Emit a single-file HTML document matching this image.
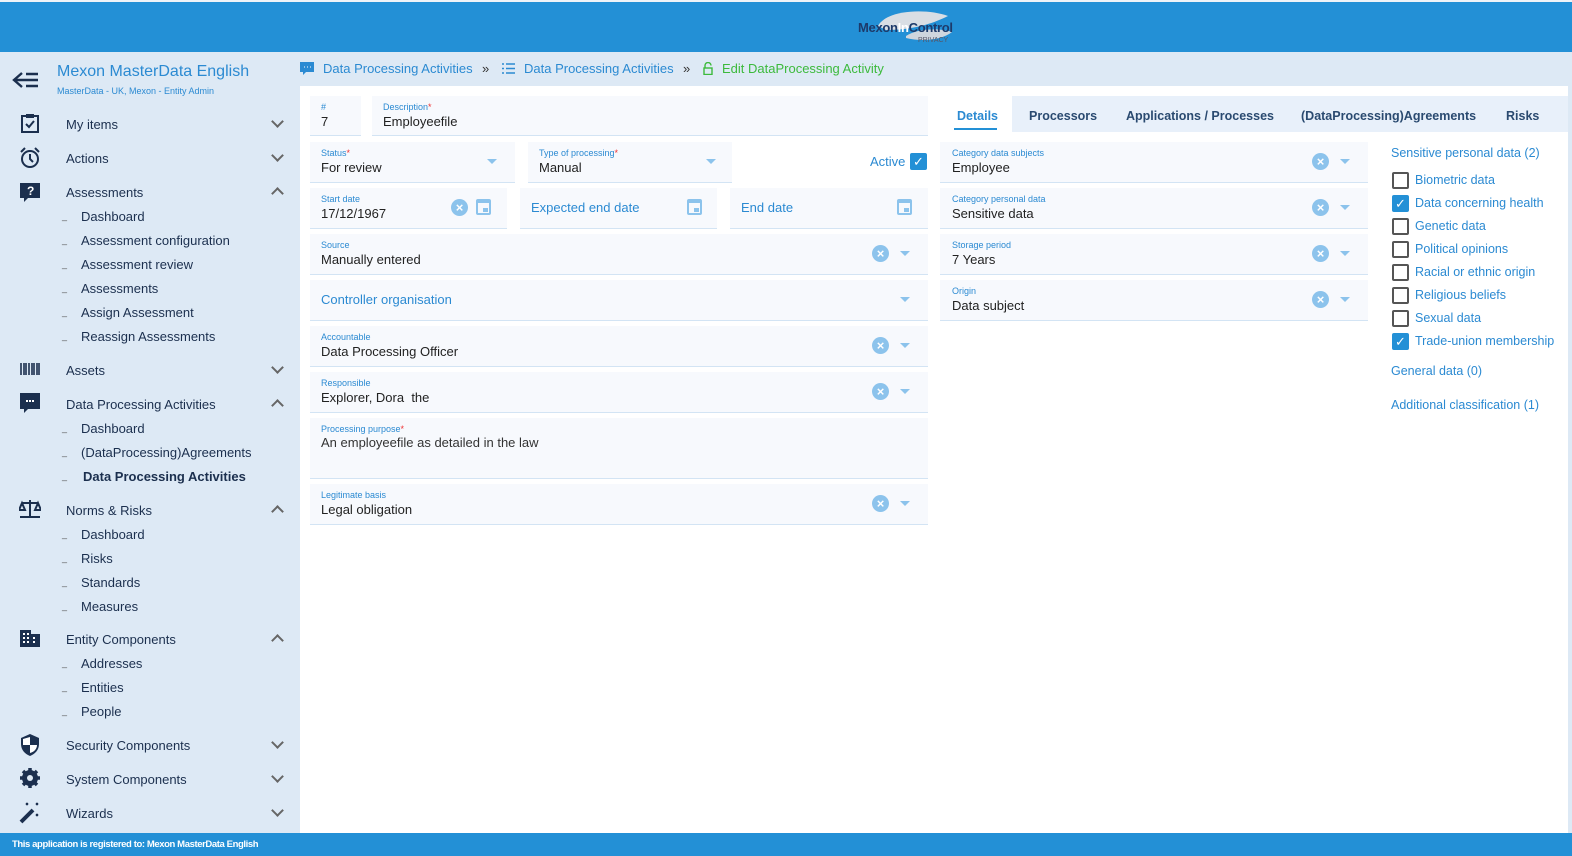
<!DOCTYPE html>
<html><head><meta charset="utf-8"><style>
*{box-sizing:border-box;margin:0;padding:0}
body{width:1572px;height:856px;position:relative;overflow:hidden;font-family:"Liberation Sans",Arial,sans-serif;background:#dde9f5;color:#1b2f4e}
.a{position:absolute}
.top{left:0;top:2px;width:1572px;height:50px;background:#2390d6}
.foot{left:0;top:833px;width:1572px;height:23px;background:#2390d6;color:#fff;font-size:9.5px;padding:6px 12px;font-weight:bold;letter-spacing:-0.4px}
.main{left:300px;top:86px;width:1268px;height:747px;background:#fff}
.nav{font-size:13px;color:#1b2f4e}
.sub{font-size:13px;color:#1b2f4e}
.dash{font-size:9px;color:#555}
.chev{width:9px;height:9px;border-right:2px solid #666;border-bottom:2px solid #666}
.f{background:#f7f9fd;border-bottom:1px solid #d3e4f4}
.lb{position:absolute;left:11px;top:6px;font-size:9px;color:#2b8ad2}
.lb i{color:#e33;font-style:normal}
.v{position:absolute;left:11px;top:18px;font-size:13px;color:#222}
.ph{position:absolute;left:11px;top:12px;font-size:13px;color:#2b8ad2}
.x{position:absolute;width:17px;height:17px;border-radius:50%;background:#8cc3ec;color:#fff;font-size:13px;font-weight:bold;text-align:center;line-height:17px}
.dd{position:absolute;width:0;height:0;border-left:5px solid transparent;border-right:5px solid transparent;border-top:5px solid #8cc3ec}
.cal{position:absolute;width:15px;height:16px;border:2px solid #8cc3ec;border-top-width:4px;border-radius:2px}
.cal:after{content:"";position:absolute;right:1px;bottom:1px;width:5px;height:4px;background:#8cc3ec}
.tab{font-size:12.5px;font-weight:bold;color:#2a4a70;top:109px}
.cb{width:17px;height:17px;border:2px solid #555;border-radius:2px}
.cbc{width:17px;height:17px;background:#2390d6;border-radius:2px;color:#fff;font-size:13px;text-align:center;line-height:17px}
.cl{font-size:12.5px;color:#2b8ad2}
</style></head><body>
<div class="a" style="left:0;top:0;width:1572px;height:2px;background:#eef3f8"></div>
<div class="a top"></div>
<svg class="a" style="left:856px;top:8px" width="104" height="38"><path d="M22 18 C30 2 70 0 92 8 C80 14 60 22 30 22 Z" fill="#d9dee4"/><path d="M50 28 C62 20 84 20 96 24 C86 32 66 34 50 30 Z" fill="#cfd6de"/><text x="2" y="24" font-family="Liberation Sans" font-weight="bold" font-size="13" fill="#1d3a6a" letter-spacing="-0.3">Mexon<tspan fill="#fff">In</tspan>Control</text><text x="62" y="34" font-family="Liberation Sans" font-size="7" fill="#556">PRIVACY</text></svg>
<div class="a main"></div>

<!-- sidebar -->
<svg class="a" style="left:12px;top:70px" width="28" height="20"><path d="M10 3 L2 10 L10 17 M2 10 H26 M14 4 H26 M14 16 H26" stroke="#1b2f4e" stroke-width="2.4" fill="none"/></svg>
<div class="a" style="left:57px;top:63px;font-size:16px;color:#2b8ad2">Mexon MasterData English</div>
<div class="a" style="left:57px;top:86px;font-size:9px;color:#2b8ad2">MasterData - UK, Mexon - Entity Admin</div>

<svg class="a" style="left:20px;top:113px" width="20" height="20"><rect x="2" y="3" width="16" height="16" fill="none" stroke="#1b2f4e" stroke-width="2"/><rect x="6" y="1" width="8" height="4" fill="#1b2f4e"/><path d="M6 11 L9 14 L14 8" stroke="#1b2f4e" stroke-width="2" fill="none"/></svg>
<div class="a nav" style="left:66px;top:117px">My items</div><div class="a chev" style="left:273px;top:117px;transform:rotate(45deg)"></div>
<svg class="a" style="left:19px;top:147px" width="22" height="22"><circle cx="11" cy="12" r="8" fill="none" stroke="#1b2f4e" stroke-width="2"/><path d="M11 7 V12 L14 15 M2 5 L6 1 M20 5 L16 1" stroke="#1b2f4e" stroke-width="2" fill="none"/></svg>
<div class="a nav" style="left:66px;top:151px">Actions</div><div class="a chev" style="left:273px;top:151px;transform:rotate(45deg)"></div>
<svg class="a" style="left:20px;top:181px" width="20" height="22"><path d="M0 2 H20 V17 H8 L4 21 V17 H0 Z" fill="#1b2f4e"/><text x="7" y="14" font-size="12" font-weight="bold" fill="#fff" font-family="Liberation Sans">?</text></svg>
<div class="a nav" style="left:66px;top:185px">Assessments</div><div class="a chev" style="left:273px;top:189px;transform:rotate(225deg)"></div>
<div class="a sub" style="left:81px;top:209px">Dashboard</div>
<div class="a sub" style="left:81px;top:233px">Assessment configuration</div>
<div class="a sub" style="left:81px;top:257px">Assessment review</div>
<div class="a sub" style="left:81px;top:281px">Assessments</div>
<div class="a sub" style="left:81px;top:305px">Assign Assessment</div>
<div class="a sub" style="left:81px;top:329px">Reassign Assessments</div>
<svg class="a" style="left:20px;top:363px" width="20" height="12"><path d="M1 0V12M4 0V12M6 0V12M9 0V12M12 0V12M14 0V12M17 0V12M19 0V12" stroke="#1b2f4e" stroke-width="1.6"/></svg>
<div class="a nav" style="left:66px;top:363px">Assets</div><div class="a chev" style="left:273px;top:363px;transform:rotate(45deg)"></div>
<svg class="a" style="left:20px;top:393px" width="20" height="22"><path d="M0 0 H20 V16 H8 L4 20 V16 H0 Z" fill="#1b2f4e"/><path d="M6 8h2M9 8h2M12 8h2" stroke="#fff" stroke-width="2"/></svg>
<div class="a nav" style="left:66px;top:397px">Data Processing Activities</div><div class="a chev" style="left:273px;top:401px;transform:rotate(225deg)"></div>
<div class="a sub" style="left:81px;top:421px">Dashboard</div>
<div class="a sub" style="left:81px;top:445px">(DataProcessing)Agreements</div>
<div class="a sub" style="left:83px;top:469px;font-weight:bold">Data Processing Activities</div>
<svg class="a" style="left:19px;top:499px" width="22" height="20"><path d="M11 1V18M3 4H19M1 18H21M3 4L0 11H6Z M19 4L16 11H22Z" stroke="#1b2f4e" stroke-width="2" fill="none"/></svg>
<div class="a nav" style="left:66px;top:503px">Norms &amp; Risks</div><div class="a chev" style="left:273px;top:507px;transform:rotate(225deg)"></div>
<div class="a sub" style="left:81px;top:527px">Dashboard</div>
<div class="a sub" style="left:81px;top:551px">Risks</div>
<div class="a sub" style="left:81px;top:575px">Standards</div>
<div class="a sub" style="left:81px;top:599px">Measures</div>
<svg class="a" style="left:20px;top:630px" width="20" height="17"><path d="M0 0H11V4H20V17H0Z" fill="#1b2f4e"/><path d="M3 4h2M7 4h2M3 8h2M7 8h2M13 8h2M3 12h2M7 12h2M13 12h2" stroke="#fff" stroke-width="2"/></svg>
<div class="a nav" style="left:66px;top:632px">Entity Components</div><div class="a chev" style="left:273px;top:636px;transform:rotate(225deg)"></div>
<div class="a sub" style="left:81px;top:656px">Addresses</div>
<div class="a sub" style="left:81px;top:680px">Entities</div>
<div class="a sub" style="left:81px;top:704px">People</div>
<svg class="a" style="left:20px;top:734px" width="20" height="22"><path d="M10 0L19 4V10C19 16 15 20 10 22C5 20 1 16 1 10V4Z" fill="#1b2f4e"/><path d="M10 3V11H17C17 15 14 18 10 19V11H3V5Z" fill="#fff"/></svg>
<div class="a nav" style="left:66px;top:738px">Security Components</div><div class="a chev" style="left:273px;top:738px;transform:rotate(45deg)"></div>
<svg class="a" style="left:20px;top:768px" width="20" height="20"><circle cx="10" cy="10" r="6" fill="none" stroke="#1b2f4e" stroke-width="4"/><path d="M10 0V20M0 10H20M3 3L17 17M17 3L3 17" stroke="#1b2f4e" stroke-width="3.5"/><circle cx="10" cy="10" r="3" fill="#dde9f5"/></svg>
<div class="a nav" style="left:66px;top:772px">System Components</div><div class="a chev" style="left:273px;top:772px;transform:rotate(45deg)"></div>
<svg class="a" style="left:19px;top:802px" width="22" height="22"><path d="M2 20L14 8" stroke="#1b2f4e" stroke-width="4"/><path d="M7 1l2 2M9 1l-2 2M17 1l2 2M19 1l-2 2M17 12l2 2M19 12l-2 2" stroke="#1b2f4e" stroke-width="1.3"/></svg>
<div class="a nav" style="left:66px;top:806px">Wizards</div><div class="a chev" style="left:273px;top:806px;transform:rotate(45deg)"></div>
<div class="a dash" style="left:62px;top:211px">_</div><div class="a dash" style="left:62px;top:235px">_</div><div class="a dash" style="left:62px;top:259px">_</div><div class="a dash" style="left:62px;top:283px">_</div><div class="a dash" style="left:62px;top:307px">_</div><div class="a dash" style="left:62px;top:331px">_</div>
<div class="a dash" style="left:62px;top:423px">_</div><div class="a dash" style="left:62px;top:447px">_</div><div class="a dash" style="left:62px;top:471px">_</div>
<div class="a dash" style="left:62px;top:529px">_</div><div class="a dash" style="left:62px;top:553px">_</div><div class="a dash" style="left:62px;top:577px">_</div><div class="a dash" style="left:62px;top:601px">_</div>
<div class="a dash" style="left:62px;top:658px">_</div><div class="a dash" style="left:62px;top:682px">_</div><div class="a dash" style="left:62px;top:706px">_</div>

<!-- breadcrumb -->
<svg class="a" style="left:300px;top:62px" width="14" height="14"><path d="M0 0H14V10H6L3 13V10H0Z" fill="#2b8ad2"/><path d="M4 5h1M7 5h1M10 5h1" stroke="#fff"/></svg>
<div class="a" style="left:323px;top:61px;font-size:13px;color:#2b8ad2">Data Processing Activities</div>
<div class="a" style="left:482px;top:61px;font-size:13px;color:#333">»</div>
<svg class="a" style="left:502px;top:63px" width="13" height="11"><path d="M0 1h2M4 1h9M0 5.5h2M4 5.5h9M0 10h2M4 10h9" stroke="#2b8ad2" stroke-width="1.4"/></svg>
<div class="a" style="left:524px;top:61px;font-size:13px;color:#2b8ad2">Data Processing Activities</div>
<div class="a" style="left:683px;top:61px;font-size:13px;color:#333">»</div>
<svg class="a" style="left:703px;top:62px" width="10" height="13"><path d="M2 6V3.5a3 3 0 0 1 6 0" stroke="#3cba3c" stroke-width="1.4" fill="none"/><rect x="1" y="6" width="8" height="6.5" fill="none" stroke="#3cba3c" stroke-width="1.4"/></svg>
<div class="a" style="left:722px;top:61px;font-size:13px;color:#3cba3c">Edit DataProcessing Activity</div>

<!-- left form -->
<div class="a f" style="left:310px;top:96px;width:51px;height:40px"><div class="lb">#</div><div class="v">7</div></div>
<div class="a f" style="left:372px;top:96px;width:556px;height:40px"><div class="lb">Description<i>*</i></div><div class="v">Employeefile</div></div>
<div class="a f" style="left:310px;top:142px;width:205px;height:41px"><div class="lb">Status<i>*</i></div><div class="v">For review</div><div class="dd" style="left:177px;top:17px"></div></div>
<div class="a f" style="left:528px;top:142px;width:204px;height:41px"><div class="lb">Type of processing<i>*</i></div><div class="v">Manual</div><div class="dd" style="left:178px;top:17px"></div></div>
<div class="a" style="left:870px;top:154px;font-size:13px;color:#2b8ad2">Active</div>
<div class="a cbc" style="left:910px;top:153px">✓</div>
<div class="a f" style="left:310px;top:188px;width:197px;height:41px"><div class="lb">Start date</div><div class="v">17/12/1967</div><div class="x" style="left:141px;top:11px">×</div><div class="cal" style="left:166px;top:11px"></div></div>
<div class="a f" style="left:520px;top:188px;width:197px;height:41px"><div class="ph">Expected end date</div><div class="cal" style="left:167px;top:11px"></div></div>
<div class="a f" style="left:730px;top:188px;width:198px;height:41px"><div class="ph">End date</div><div class="cal" style="left:167px;top:11px"></div></div>
<div class="a f" style="left:310px;top:234px;width:618px;height:41px"><div class="lb">Source</div><div class="v">Manually entered</div><div class="x" style="left:562px;top:11px">×</div><div class="dd" style="left:590px;top:17px"></div></div>
<div class="a f" style="left:310px;top:280px;width:618px;height:41px"><div class="ph">Controller organisation</div><div class="dd" style="left:590px;top:17px"></div></div>
<div class="a f" style="left:310px;top:326px;width:618px;height:41px"><div class="lb">Accountable</div><div class="v">Data Processing Officer</div><div class="x" style="left:562px;top:11px">×</div><div class="dd" style="left:590px;top:17px"></div></div>
<div class="a f" style="left:310px;top:372px;width:618px;height:41px"><div class="lb">Responsible</div><div class="v">Explorer, Dora&nbsp; the</div><div class="x" style="left:562px;top:11px">×</div><div class="dd" style="left:590px;top:17px"></div></div>
<div class="a f" style="left:310px;top:418px;width:618px;height:61px"><div class="lb">Processing purpose<i>*</i></div><div class="v" style="top:17px;color:#333">An employeefile as detailed in the law</div></div>
<div class="a f" style="left:310px;top:484px;width:618px;height:41px"><div class="lb">Legitimate basis</div><div class="v">Legal obligation</div><div class="x" style="left:562px;top:11px">×</div><div class="dd" style="left:590px;top:17px"></div></div>

<!-- tabs -->
<div class="a" style="left:1012px;top:96px;width:556px;height:36px;background:#e8f0fa"></div>
<div class="a tab" style="left:957px;color:#2b8ad2">Details</div>
<div class="a" style="left:954px;top:128px;width:43px;height:2px;background:#2390d6"></div>
<div class="a tab" style="left:1029px">Processors</div>
<div class="a tab" style="left:1126px">Applications / Processes</div>
<div class="a tab" style="left:1301px">(DataProcessing)Agreements</div>
<div class="a tab" style="left:1506px">Risks</div>

<div class="a f" style="left:940px;top:142px;width:428px;height:41px"><div class="lb" style="left:12px">Category data subjects</div><div class="v" style="left:12px">Employee</div><div class="x" style="left:372px;top:11px">×</div><div class="dd" style="left:400px;top:17px"></div></div>
<div class="a f" style="left:940px;top:188px;width:428px;height:41px"><div class="lb" style="left:12px">Category personal data</div><div class="v" style="left:12px">Sensitive data</div><div class="x" style="left:372px;top:11px">×</div><div class="dd" style="left:400px;top:17px"></div></div>
<div class="a f" style="left:940px;top:234px;width:428px;height:41px"><div class="lb" style="left:12px">Storage period</div><div class="v" style="left:12px">7 Years</div><div class="x" style="left:372px;top:11px">×</div><div class="dd" style="left:400px;top:17px"></div></div>
<div class="a f" style="left:940px;top:280px;width:428px;height:41px"><div class="lb" style="left:12px">Origin</div><div class="v" style="left:12px">Data subject</div><div class="x" style="left:372px;top:11px">×</div><div class="dd" style="left:400px;top:17px"></div></div>

<div class="a cl" style="left:1391px;top:146px">Sensitive personal data (2)</div>
<div class="a cb" style="left:1392px;top:172px"></div><div class="a cl" style="left:1415px;top:173px">Biometric data</div>
<div class="a cbc" style="left:1392px;top:195px">✓</div><div class="a cl" style="left:1415px;top:196px">Data concerning health</div>
<div class="a cb" style="left:1392px;top:218px"></div><div class="a cl" style="left:1415px;top:219px">Genetic data</div>
<div class="a cb" style="left:1392px;top:241px"></div><div class="a cl" style="left:1415px;top:242px">Political opinions</div>
<div class="a cb" style="left:1392px;top:264px"></div><div class="a cl" style="left:1415px;top:265px">Racial or ethnic origin</div>
<div class="a cb" style="left:1392px;top:287px"></div><div class="a cl" style="left:1415px;top:288px">Religious beliefs</div>
<div class="a cb" style="left:1392px;top:310px"></div><div class="a cl" style="left:1415px;top:311px">Sexual data</div>
<div class="a cbc" style="left:1392px;top:333px">✓</div><div class="a cl" style="left:1415px;top:334px">Trade-union membership</div>
<div class="a cl" style="left:1391px;top:364px">General data (0)</div>
<div class="a cl" style="left:1391px;top:398px">Additional classification (1)</div>

<div class="a foot">This application is registered to: Mexon MasterData English</div>
</body></html>
